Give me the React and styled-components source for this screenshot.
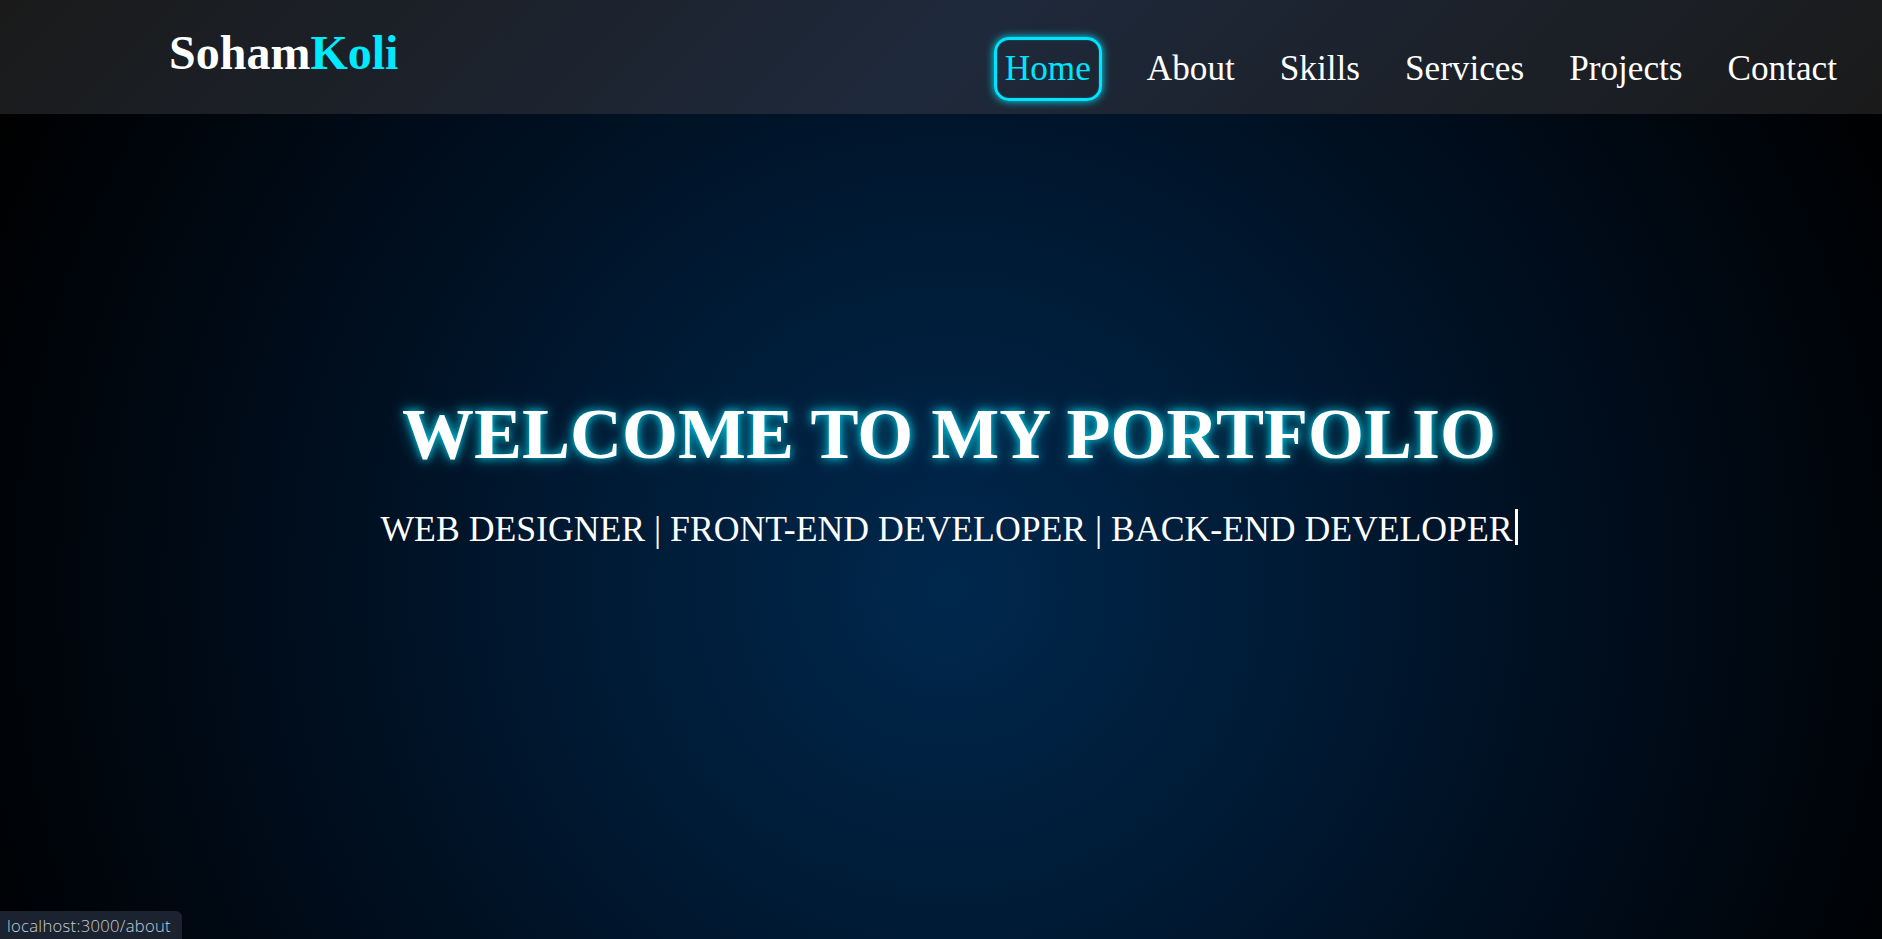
import React from "react";
import styled, { createGlobalStyle, css } from "styled-components";

const Global = createGlobalStyle`
  html, body { margin: 0; padding: 0; background: #000; }
  body { font-family: "Liberation Serif", "Times New Roman", serif; overflow: hidden; }
  * { box-sizing: border-box; }
`;

const Header = styled.header`
  position: fixed;
  top: 0;
  left: 0;
  right: 0;
  height: 114px;
  z-index: 10;
  display: flex;
  justify-content: space-between;
  align-items: flex-start;
  padding: 0 34px 0 169px;
  background: linear-gradient(135deg, #1a1a1a, #1e293b, #1a1a1a);
`;

const Logo = styled.div`
  margin-top: 26px;
  font-family: "Liberation Serif", "Times New Roman", serif;
  font-weight: 700;
  font-size: 48px;
  line-height: 54px;
  color: #ffffff;
`;

const Accent = styled.span`
  color: #00eaff;
`;

const NavList = styled.ul`
  list-style: none;
  margin: 37px 0 0;
  padding: 0;
  display: flex;
  gap: 23px;
`;

const NavLink = styled.a`
  display: block;
  padding: 9px 8px;
  border: 3px solid transparent;
  border-radius: 15px;
  font-family: "Liberation Serif", "Times New Roman", serif;
  font-size: 35.2px;
  line-height: 40px;
  color: #ffffff;
  text-decoration: none;
  ${(p) =>
    p.$active &&
    css`
      color: #00e5ff;
      border-color: #00e5ff;
      box-shadow: 0 0 8px #00e5ff, inset 0 0 2px rgba(0, 229, 255, 0.4);
      margin-right: 11px;
    `}
`;

const Hero = styled.section`
  min-height: 100vh;
  display: flex;
  flex-direction: column;
  align-items: center;
  justify-content: center;
  padding: 3px 0 0 16px;
  background: radial-gradient(
    circle farthest-corner at 949px 588px,
    #00284d 0%,
    #001b36 30%,
    #000d1c 60%,
    #000000 95%
  );
`;

const Title = styled.h1`
  margin: 0;
  font-family: "Liberation Serif", "Times New Roman", serif;
  font-weight: 700;
  font-size: 72px;
  line-height: normal;
  color: #ffffff;
  text-shadow: 0 0 8px rgba(0, 229, 255, 0.9), 0 0 18px rgba(0, 229, 255, 0.45);
`;

const Subtitle = styled.p`
  margin: 32px 0 0;
  font-family: "Liberation Serif", "Times New Roman", serif;
  font-size: 35.7px;
  line-height: normal;
  color: #ffffff;
`;

const Caret = styled.span`
  display: inline-block;
  width: 3px;
  height: 36px;
  margin-left: 2px;
  vertical-align: -4px;
  background: #ffffff;
`;

const StatusBubble = styled.div`
  position: fixed;
  left: 0;
  bottom: 0;
  height: 28px;
  padding: 0 11px 0 7px;
  display: flex;
  align-items: center;
  background: #1b2330;
  border-top-right-radius: 6px;
  font-family: "Open Sans", "Noto Sans", sans-serif;
  font-weight: 300;
  font-size: 16.6px;
  letter-spacing: 0.3px;
  color: #c6cdd6;
`;

const links = ["Home", "About", "Skills", "Services", "Projects", "Contact"];

export default function App() {
  return (
    <>
      <Global />
      <Header>
        <Logo>
          Soham<Accent>Koli</Accent>
        </Logo>
        <nav>
          <NavList>
            {links.map((l, i) => (
              <li key={l}>
                <NavLink href="#" $active={i === 0}>
                  {l}
                </NavLink>
              </li>
            ))}
          </NavList>
        </nav>
      </Header>
      <Hero>
        <Title>WELCOME TO MY PORTFOLIO</Title>
        <Subtitle>
          WEB DESIGNER | FRONT-END DEVELOPER | BACK-END DEVELOPER
          <Caret />
        </Subtitle>
      </Hero>
      <StatusBubble>localhost:3000/about</StatusBubble>
    </>
  );
}
